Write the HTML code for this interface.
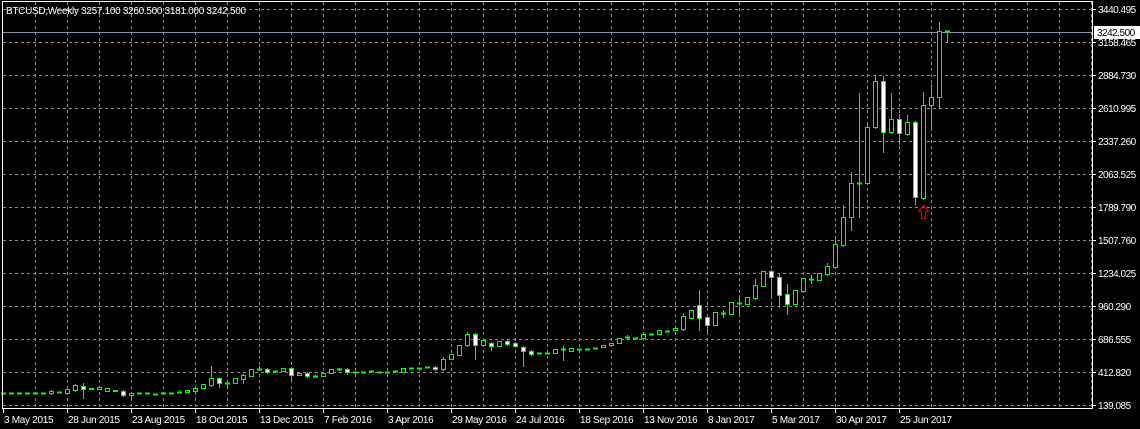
<!DOCTYPE html>
<html><head><meta charset="utf-8"><style>
html,body{margin:0;padding:0;background:#000;width:1140px;height:429px;overflow:hidden}
svg{display:block}
text{font-family:"Liberation Sans",sans-serif;font-size:10px;letter-spacing:-0.3px;fill:#fff}
.r{letter-spacing:-0.5px}
</style></head><body>
<svg id="s" width="1140" height="429" xmlns="http://www.w3.org/2000/svg" shape-rendering="crispEdges">
<rect width="1140" height="429" fill="#000"/>
<g id="grid" stroke="#8a8a8a" stroke-dasharray="3,3" stroke-width="1"></g>
<line x1="2" y1="32.5" x2="1092" y2="32.5" stroke="#8898aa"/>
<g id="c"></g>
<rect x="2.5" y="1.5" width="1090" height="407" fill="none" stroke="#fff"/>
<g id="ax"></g>
<text x="6" y="14" fill="#ddd">BTCUSD,Weekly  3257.100 3260.500 3181.000 3242.500</text>
<path d="M923.5 205.5 L928.5 211.5 L925.5 211.5 L925.5 218.5 L921.5 218.5 L921.5 211.5 L918.5 211.5 Z" fill="none" stroke="#d00000" stroke-width="1.3" shape-rendering="auto"/>
<rect x="1094" y="26" width="46" height="13" fill="#fff"/>
<text class="r" x="1097" y="36" style="fill:#000">3242.500</text>
</svg>
<script>
var NS="http://www.w3.org/2000/svg";
function el(p,t,a,tx){var e=document.createElementNS(NS,t);for(var k in a)e.setAttribute(k,a[k]);if(tx)e.textContent=tx;p.appendChild(e);return e;}
var g=document.getElementById('grid'),c=document.getElementById('c'),ax=document.getElementById('ax');
var hy=[9,42,75,108,141,174,207,240,273,306,339,372,405];
var lab=["3440.495","3158.465","2884.730","2610.995","2337.260","2063.525","1789.790","1507.760","1234.025","960.290","686.555","412.820","139.085"];
hy.forEach(function(y,i){el(g,'line',{x1:3,y1:y+.5,x2:1092,y2:y+.5});el(ax,'line',{x1:1092,y1:y+.5,x2:1096,y2:y+.5,stroke:'#fff'});el(ax,'text',{x:1098,y:y+4,'class':'r'},lab[i]);});
for(var x=35;x<1092;x+=32){el(g,'line',{x1:x+.5,y1:2,x2:x+.5,y2:408});}
var dl=["3 May 2015","28 Jun 2015","23 Aug 2015","18 Oct 2015","13 Dec 2015","7 Feb 2016","3 Apr 2016","29 May 2016","24 Jul 2016","18 Sep 2016","13 Nov 2016","8 Jan 2017","5 Mar 2017","30 Apr 2017","25 Jun 2017"];
dl.forEach(function(t,i){var x=3+64*i;el(ax,'line',{x1:x+.5,y1:408,x2:x+.5,y2:413,stroke:'#fff'});el(ax,'text',{x:x+1,y:423},t);});
var d=[[393,393],[393,393],[393,393],[393,393],[393,393],[393,393],[391,393,390,394],[392,392],[389,393],[385,390,384,391],
[386,389,383,398,1],[388,389],[387,389],[388,391],[390,391],[391,395,390,396,1],[393,395,392,400],[393,393],[393,393],[394,394],
[393,393],[393,393],[392,392],[390,392],[388,391],[384,388],[378,385,366,386],[378,383,377,387,1],[383,383,380,386],[378,383],
[375,379,374,383],[369,376],[369,369,366,370],[369,372,368,373,1],[371,371],[368,371],[368,375,367,380,1],[373,375],[373,376,372,377,1],[376,376,375,377],
[373,376],[369,373],[369,369,368,370],[369,372,368,374,1],[372,372],[372,372],[371,371],[372,372],[372,372],[371,371],
[368,372],[368,368],[368,368],[367,367],[367,369,366,370,1],[359,369,357,370],[354,359],[345,355],[334,345,332,346],[334,345,333,359,1],
[340,345],[343,346,342,350,1],[341,346],[341,344,340,345,1],[343,346,342,347,1],[347,351,346,366,1],[351,354,350,355,1],[353,353],[353,353],[349,353],
[349,349,346,360],[348,351],[349,349],[349,349],[348,348],[345,347],[343,345],[338,343],[337,337,335,339],[338,338],
[334,338],[334,334],[330,334],[331,331],[328,330],[316,329,313,330],[310,318],[305,318,290,330,1],[317,325,316,333,1],[312,325],
[313,313,310,317],[302,314],[303,303,295,313],[297,304],[285,298,279,299],[271,286],[271,277,270,298,1],[277,295,273,307,1],[294,304,284,314,1],[290,304],
[278,291],[279,279,275,283],[273,280],[266,274,263,275],[244,267,237,268],[217,245,205,246],[183,217,172,230],[183,183,93,217],[127,183,122,184],[81,127,76,128],
[81,132,76,152,1],[119,132,93,133],[119,133,114,144,1],[122,134,115,135],[122,197,121,204,1],[105,198,92,199],[97,105,84,127],[31,97,22,108],[31,31,30,41]];
d.forEach(function(k,i){var cx=3+8*i,t=k[0],b=k[1],h=k[2]!=null?k[2]:t,l=k[3]!=null?k[3]:b,w=k[4];
if(h<t)el(c,'line',{x1:cx+.5,y1:h,x2:cx+.5,y2:t,stroke:'#00ff00'});
if(l>b)el(c,'line',{x1:cx+.5,y1:b+1,x2:cx+.5,y2:l+1,stroke:'#00ff00'});
if(b-t<1){el(c,'rect',{x:cx-2,y:t-.5,width:5,height:2,fill:'#00ff00'});}
else el(c,'rect',{x:cx-1.5,y:t+.5,width:4,height:b-t,fill:w?'#fff':'#000',stroke:'#00ff00'});});
</script>
</body></html>
